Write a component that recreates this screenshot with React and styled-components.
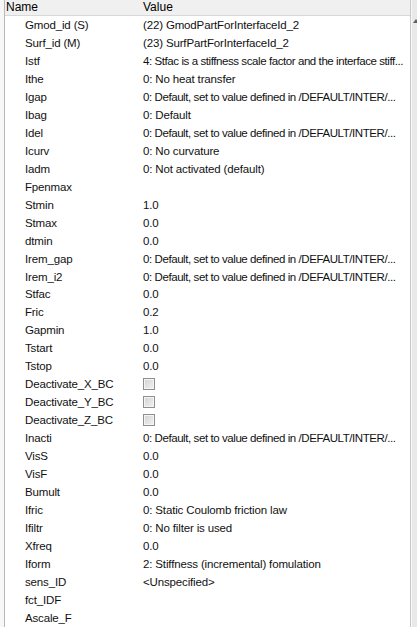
import React from 'react'
import styled, { createGlobalStyle } from 'styled-components'

const Global = createGlobalStyle`
  body {
    margin: 0;
    background: #ffffff;
    font-family: Tahoma, "Liberation Sans", Arial, sans-serif;
  }
`

const Frame = styled.div`
  width: 417px;
  height: 627px;
  overflow: hidden;
  display: flex;
  background: #f7f7f7;
`

const Grid = styled.div`
  flex: 1;
  min-width: 0;
  margin-left: 4px;
  border-left: 1px solid #b9b9b9;
  border-right: 1px solid #c8c8c8;
  background: #ffffff;
  display: flex;
  flex-direction: column;
`

const Header = styled.div`
  height: 15px;
  display: flex;
  align-items: center;
  background: #f0f0f0;
  border-bottom: 1px solid #d8d8d8;
  font-size: 12px;
  color: #000;
`

const HeadCell = styled.div`
  width: ${p => p.$w || 'auto'};
  flex: ${p => (p.$w ? 'none' : 1)};
  padding-left: ${p => p.$pad}px;
  box-sizing: border-box;
`

const Row = styled.div`
  height: 18px;
  display: flex;
  align-items: center;
  font-size: 11.5px;
  letter-spacing: -0.15px;
  color: #111;
`

const NameCell = styled.div`
  width: 138px;
  flex: none;
  padding-left: 20px;
  box-sizing: border-box;
  white-space: nowrap;
  overflow: hidden;
`

const ValueCell = styled.div`
  flex: 1;
  min-width: 0;
  white-space: nowrap;
  overflow: hidden;
  text-overflow: ellipsis;
  letter-spacing: ${p => (p.$tight ? '-0.42px' : 'inherit')};
`

const Check = styled.span`
  display: inline-block;
  width: 12px;
  height: 12px;
  margin-top: 2px;
  box-sizing: border-box;
  border: 1px solid #8e8f8f;
  background: linear-gradient(135deg, #d2d2d2 0%, #f2f2f2 100%);
  box-shadow: inset 0 0 0 1px #f4f4f4;
`

const Scroll = styled.div`
  width: 5px;
  flex: none;
  background: #e9e9e9;
  position: relative;
  border-left: 1px solid #f8f8f8;
`

const Arrow = styled.span`
  position: absolute;
  top: 19px;
  left: 1px;
  width: 0;
  height: 0;
  border-left: 3px solid transparent;
  border-right: 3px solid transparent;
  border-bottom: 4px solid #606060;
`

const DEF = '0: Default, set to value defined in /DEFAULT/INTER/...'

const rows = [
  ['Gmod_id (S)', '(22) GmodPartForInterfaceId_2'],
  ['Surf_id (M)', '(23) SurfPartForInterfaceId_2'],
  ['Istf', '4: Stfac is a stiffness scale factor and the interface stiff...'],
  ['Ithe', '0: No heat transfer'],
  ['Igap', DEF],
  ['Ibag', '0: Default'],
  ['Idel', DEF],
  ['Icurv', '0: No curvature'],
  ['Iadm', '0: Not activated (default)'],
  ['Fpenmax', ''],
  ['Stmin', '1.0'],
  ['Stmax', '0.0'],
  ['dtmin', '0.0'],
  ['Irem_gap', DEF],
  ['Irem_i2', DEF],
  ['Stfac', '0.0'],
  ['Fric', '0.2'],
  ['Gapmin', '1.0'],
  ['Tstart', '0.0'],
  ['Tstop', '0.0'],
  ['Deactivate_X_BC', null],
  ['Deactivate_Y_BC', null],
  ['Deactivate_Z_BC', null],
  ['Inacti', DEF],
  ['VisS', '0.0'],
  ['VisF', '0.0'],
  ['Bumult', '0.0'],
  ['Ifric', '0: Static Coulomb friction law'],
  ['Ifiltr', '0: No filter is used'],
  ['Xfreq', '0.0'],
  ['Iform', '2: Stiffness (incremental) fomulation'],
  ['sens_ID', '<Unspecified>'],
  ['fct_IDF', ''],
  ['Ascale_F', ''],
]

export default function App() {
  return (
    <Frame>
      <Global />
      <Grid>
        <Header>
          <HeadCell $w="138px" $pad={1}>Name</HeadCell>
          <HeadCell $pad={0}>Value</HeadCell>
        </Header>
        {rows.map(([name, value]) => (
          <Row key={name}>
            <NameCell>{name}</NameCell>
            <ValueCell $tight={value && value.endsWith('...')}>
              {value === null ? <Check /> : value}
            </ValueCell>
          </Row>
        ))}
      </Grid>
      <Scroll>
        <Arrow />
      </Scroll>
    </Frame>
  )
}
